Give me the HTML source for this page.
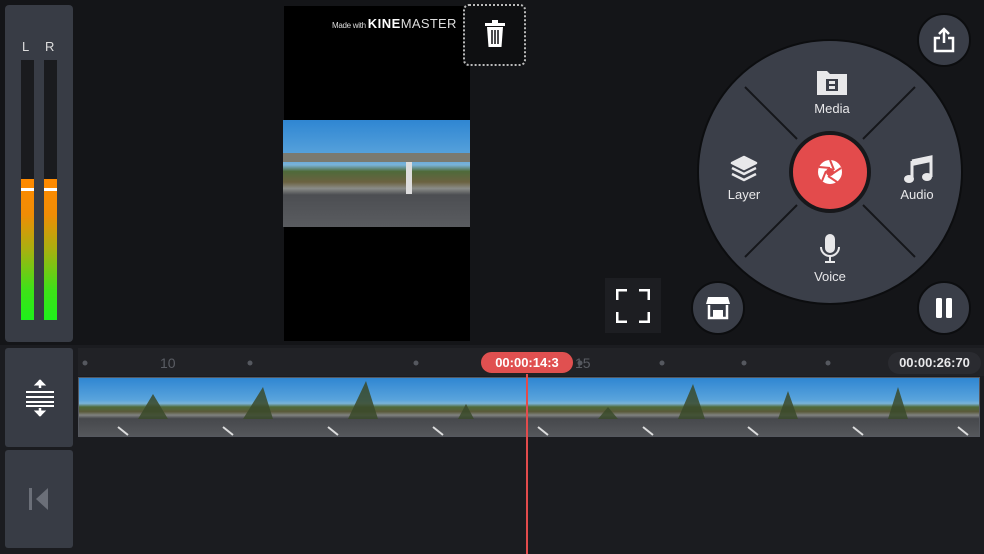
<!DOCTYPE html>
<html><head><meta charset="utf-8"><style>
*{margin:0;padding:0;box-sizing:border-box}
body{width:984px;height:554px;background:#141518;position:relative;overflow:hidden;font-family:"Liberation Sans",sans-serif;color:#fff}
.a{position:absolute}
.btn{position:absolute;width:54px;height:54px;border-radius:50%;background:#3a3e48;border:2px solid #0c0d0f;display:flex;align-items:center;justify-content:center}
.road{background:linear-gradient(180deg,#2f86d2 0%,#5aa4dc 35%,#7ab3d8 42%,#4f6a3a 48%,#6b6240 58%,#8a8c88 64%,#4c4e52 70%,#5a5c60 100%)}
.lbl{position:absolute;font-size:13px;color:#e8e8ea;text-align:center;width:80px}
</style></head><body>
<div class="a" style="left:5px;top:5px;width:68px;height:337px;background:#383c45;border-radius:4px"></div>
<div class="a" style="left:22px;top:39px;font-size:13px;color:#ddd">L</div>
<div class="a" style="left:45px;top:39px;font-size:13px;color:#ddd">R</div>
<div class="a" style="left:21px;top:60px;width:13px;height:260px;background:#1a1b1e"></div>
<div class="a" style="left:44px;top:60px;width:13px;height:260px;background:#1a1b1e"></div>
<div class="a" style="left:21px;top:179px;width:13px;height:141px;background:linear-gradient(#ff8a00,#f08c05 25%,#a8b010 50%,#40e018 78%,#1ef01a)"></div>
<div class="a" style="left:44px;top:179px;width:13px;height:141px;background:linear-gradient(#ff8a00,#f08c05 25%,#a8b010 50%,#40e018 78%,#1ef01a)"></div>
<div class="a" style="left:21px;top:188px;width:13px;height:3px;background:#fff"></div>
<div class="a" style="left:44px;top:188px;width:13px;height:3px;background:#fff"></div>
<div class="a" style="left:284px;top:6px;width:186px;height:335px;background:#000"></div>
<div class="a road" style="left:283px;top:120px;width:187px;height:107px"></div>
<div class="a" style="left:283px;top:153px;width:187px;height:9px;background:#7a7a70"></div>
<div class="a" style="left:406px;top:162px;width:6px;height:32px;background:#ddd"></div>
<div class="a" style="left:332px;top:16px;font-size:8px;color:#ddd;white-space:nowrap;letter-spacing:-0.3px">Made with <b style="font-size:13px;letter-spacing:0.5px;color:#fff">KINE</b><span style="font-size:13px;letter-spacing:0.3px">MASTER</span></div>
<div class="a" style="left:463px;top:4px;width:63px;height:62px;border:2px dotted #bbb;border-radius:6px;background:#0e0f11"></div>
<svg class="a" style="left:484px;top:20px" width="22" height="28" viewBox="0 0 22 28"><rect x="1" y="3" width="20" height="3" fill="#fff"/><rect x="8" y="0" width="6" height="3" fill="#fff"/><path d="M3 7h16l-1.5 20h-13z" fill="#fff"/><path d="M8 10v14M11 10v14M14 10v14" stroke="#0e0f11" stroke-width="1.5"/></svg>
<div class="a" style="left:697px;top:39px;width:266px;height:266px;border-radius:50%;background:#3b3f49;border:2px solid #0c0d0f"></div>
<svg class="a" style="left:697px;top:39px" width="266" height="266"><g stroke="#15161a" stroke-width="2"><line x1="48" y1="48" x2="100" y2="100"/><line x1="218" y1="48" x2="166" y2="100"/><line x1="48" y1="218" x2="100" y2="166"/><line x1="218" y1="218" x2="166" y2="166"/></g></svg>
<div class="a" style="left:789px;top:131px;width:82px;height:82px;border-radius:50%;background:#e34b4c;border:4px solid #17181b"></div>
<svg class="a" style="left:816px;top:158px" width="28" height="28" viewBox="0 0 28 28"><circle cx="14" cy="14" r="12" fill="#fff"/><g stroke="#e34b4c" stroke-width="2"><line x1="14" y1="2" x2="18" y2="12"/><line x1="25" y1="10" x2="16" y2="16"/><line x1="21" y1="24" x2="12" y2="18"/><line x1="6" y1="23" x2="10" y2="13"/><line x1="3" y1="9" x2="14" y2="10"/></g><circle cx="14" cy="14" r="4" fill="#e34b4c"/></svg>
<svg class="a" style="left:817px;top:69px" width="30" height="26" viewBox="0 0 30 26"><path d="M0 2h10l3 3h17v21H0z" fill="#e8e8ea"/><rect x="9" y="10" width="12" height="12" fill="#3b3f49"/><rect x="12" y="12" width="6" height="3" fill="#e8e8ea"/><rect x="12" y="17" width="6" height="3" fill="#e8e8ea"/></svg>
<div class="lbl" style="left:792px;top:101px">Media</div>
<svg class="a" style="left:729px;top:155px" width="30" height="28" viewBox="0 0 30 28"><g fill="none" stroke="#e8e8ea" stroke-width="2.5" stroke-linejoin="round"><path d="M15 2l12 6-12 6-12-6z" fill="#e8e8ea"/><path d="M3 13l12 6 12-6"/><path d="M3 19l12 6 12-6"/></g></svg>
<div class="lbl" style="left:704px;top:187px">Layer</div>
<svg class="a" style="left:903px;top:155px" width="30" height="30" viewBox="0 0 30 30"><path d="M9 6l19-4v20" fill="none" stroke="#e8e8ea" stroke-width="3"/><path d="M9 6v18" stroke="#e8e8ea" stroke-width="3"/><ellipse cx="6" cy="24" rx="5" ry="4" fill="#e8e8ea"/><ellipse cx="24" cy="22" rx="5" ry="4" fill="#e8e8ea"/><path d="M9 6l19-4v5L9 11z" fill="#e8e8ea"/></svg>
<div class="lbl" style="left:877px;top:187px">Audio</div>
<svg class="a" style="left:819px;top:233px" width="22" height="32" viewBox="0 0 22 32"><rect x="6" y="1" width="10" height="19" rx="5" fill="#e8e8ea"/><path d="M2 14a9 9 0 0 0 18 0" fill="none" stroke="#e8e8ea" stroke-width="2"/><path d="M11 23v5M6 29h10" stroke="#e8e8ea" stroke-width="2"/></svg>
<div class="lbl" style="left:790px;top:269px">Voice</div>
<div class="btn" style="left:917px;top:13px"><svg width="24" height="26" viewBox="0 0 24 26"><path d="M12 2v14M7 7l5-5 5 5" fill="none" stroke="#fff" stroke-width="2.5"/><path d="M8 11H3v13h18V11h-5" fill="none" stroke="#fff" stroke-width="2.5"/></svg></div>
<div class="btn" style="left:917px;top:281px"><svg width="20" height="22"><rect x="2" y="1" width="6" height="20" rx="1.5" fill="#fff"/><rect x="12" y="1" width="6" height="20" rx="1.5" fill="#fff"/></svg></div>
<div class="btn" style="left:691px;top:281px"><svg width="26" height="24" viewBox="0 0 26 24"><path d="M3 1h20l2 7H1z" fill="#fff"/><path d="M4 9v13h18V9" fill="none" stroke="#fff" stroke-width="2.5"/><rect x="8" y="14" width="10" height="8" fill="#fff"/></svg></div>
<div class="a" style="left:605px;top:278px;width:56px;height:55px;background:#1d1e22"></div>
<svg class="a" style="left:616px;top:289px" width="34" height="34"><g fill="none" stroke="#fff" stroke-width="3"><path d="M1 11V1h10M23 1h10v10M33 23v10H23M11 33H1V23"/></g></svg>
<div class="a" style="left:0;top:345px;width:984px;height:209px;background:#1b1c20"></div>
<div class="a" style="left:5px;top:348px;width:68px;height:99px;background:#383c45;border-radius:3px"></div>
<div class="a" style="left:5px;top:450px;width:68px;height:98px;background:#383c45;border-radius:3px"></div>
<svg class="a" style="left:25px;top:378px" width="30" height="40" viewBox="0 0 30 40"><g stroke="#fff" stroke-width="2.5" fill="#fff"><path d="M15 2v8M15 30v8"/><path d="M10 7l5-5 5 5z M10 33l5 5 5-5z" stroke-width="1"/><path d="M1 14h28M1 19h28M1 24h28M1 28h28" stroke-width="2"/></g></svg>
<svg class="a" style="left:28px;top:486px" width="24" height="26"><rect x="1" y="2" width="3" height="22" fill="#6b6f78"/><path d="M20 2L8 13l12 11z" fill="#6b6f78"/></svg>
<div class="a" style="left:78px;top:348px;width:906px;height:28px;background:#212226"></div>
<div class="a" style="left:160px;top:355px;font-size:14px;color:#5a5d64">10</div>
<div class="a" style="left:575px;top:355px;font-size:14px;color:#5a5d64">15</div>
<svg class="a" style="left:78px;top:358px" width="906" height="10"><g fill="#55585f"><circle cx="7" cy="5" r="2.5"/><circle cx="172" cy="5" r="2.5"/><circle cx="338" cy="5" r="2.5"/><circle cx="502" cy="5" r="2.5"/><circle cx="584" cy="5" r="2.5"/><circle cx="666" cy="5" r="2.5"/><circle cx="750" cy="5" r="2.5"/></g></svg>
<div class="a" style="left:78px;top:377px;width:902px;height:60px;border:1px solid #55585f;background:linear-gradient(180deg,#2f86d2 0%,#5aa4dc 38%,#7ab3d8 44%,#4f6a3a 50%,#5a5a3a 58%,#808280 64%,#46484c 70%,#55575b 100%)"></div>
<svg class="a" style="left:78px;top:377px" width="902" height="60"><g stroke="#fff" stroke-width="2" opacity=".8"><line x1="50" y1="58" x2="40" y2="50"/><line x1="155" y1="58" x2="145" y2="50"/><line x1="260" y1="58" x2="250" y2="50"/><line x1="365" y1="58" x2="355" y2="50"/><line x1="470" y1="58" x2="460" y2="50"/><line x1="575" y1="58" x2="565" y2="50"/><line x1="680" y1="58" x2="670" y2="50"/><line x1="785" y1="58" x2="775" y2="50"/><line x1="890" y1="58" x2="880" y2="50"/></g><g fill="#3a4a2a" opacity=".85"><path d="M60 42l15-25 15 25z"/><path d="M165 42l20-32 10 32z"/><path d="M270 42l18-38 12 38z"/><path d="M380 42l8-15 8 15z"/><path d="M520 42l10-12 10 12z"/><path d="M600 42l15-35 12 35z"/><path d="M700 42l10-28 10 28z"/><path d="M810 42l10-32 10 32z"/></g></svg>
<div class="a" style="left:526px;top:362px;width:2px;height:192px;background:#e34b4c"></div>
<div class="a" style="left:480px;top:351px;width:94px;height:23px;border-radius:12px;background:#e05050;border:1px solid #222;font-size:13px;font-weight:bold;text-align:center;line-height:21px">00:00:14:3</div>
<div class="a" style="left:888px;top:352px;width:93px;height:22px;border-radius:11px;background:#2a2b30;font-size:13px;font-weight:bold;text-align:center;line-height:22px;color:#e8e8ea">00:00:26:70</div>
</body></html>
